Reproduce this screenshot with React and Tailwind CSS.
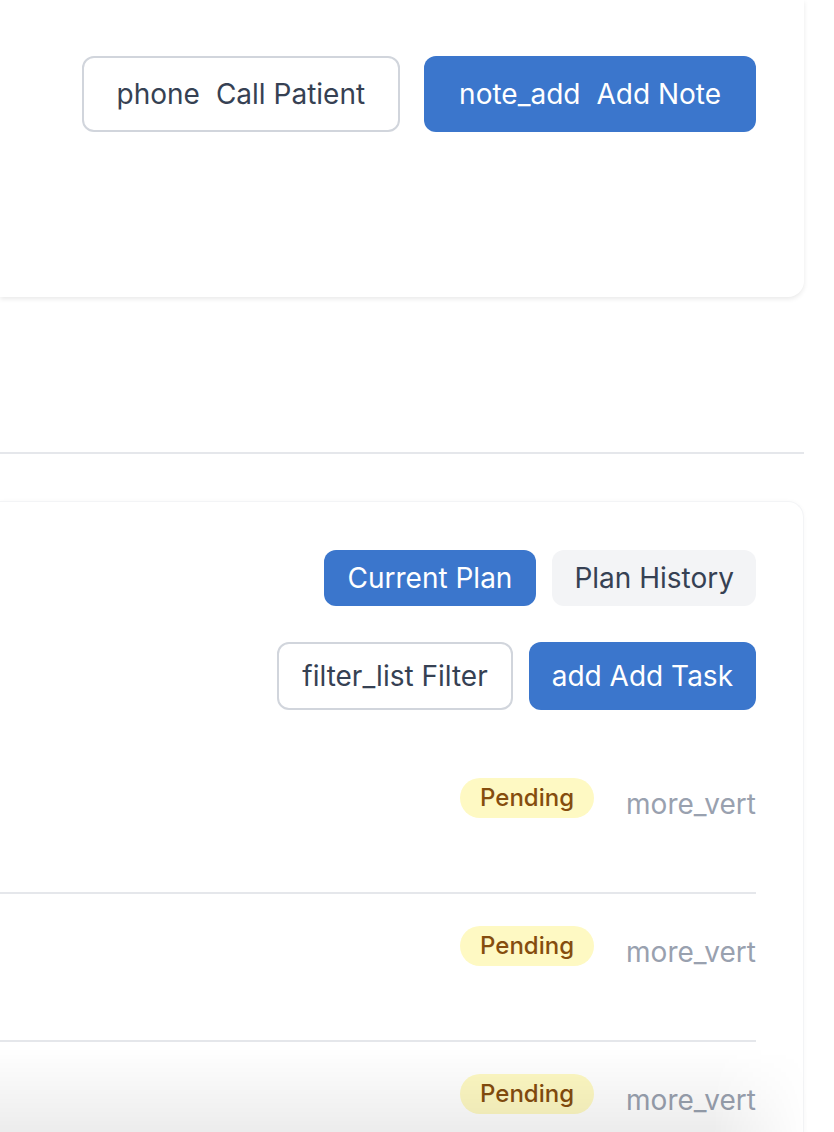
import React from 'react';

const TaskRow = () => (
  <div className="flex justify-end items-start gap-[32px] pt-[32px] h-[148px] border-b-2 border-gray-200">
    <span className="rounded-full bg-[#fef9c3] px-[20px] py-[4px] text-[24px] leading-[32px] font-medium text-[#854d0e]">
      Pending
    </span>
    <span className="pt-[6px] text-[28px] leading-[40px] text-gray-400">more_vert</span>
  </div>
);

export default function App() {
  return (
    <div className="relative w-[834px] h-[1132px] overflow-hidden bg-white font-['Inter',sans-serif]">
      {/* patient header card */}
      <div className="w-[804px] h-[297px] bg-white rounded-br-2xl shadow-[0_2px_5px_rgba(0,0,0,0.09)] pt-[56px] pr-[48px] flex justify-end items-start gap-[24px]">
        <button className="flex items-center gap-[16px] h-[76px] px-[33px] rounded-[12px] border-2 border-gray-300 bg-white text-[28px] leading-[40px] text-gray-700">
          <span>phone</span>
          <span>Call Patient</span>
        </button>
        <button className="flex items-center gap-[16px] h-[76px] px-[35px] rounded-[12px] bg-[#3b76cc] text-[28px] leading-[40px] text-white">
          <span>note_add</span>
          <span>Add Note</span>
        </button>
      </div>

      <div className="mt-[155px] w-[804px] h-[2px] bg-gray-200" />

      {/* care plan card */}
      <div className="mt-[47px] w-[804px] h-[700px] bg-white rounded-tr-2xl border-t border-r border-gray-100 shadow-[0_0_4px_rgba(0,0,0,0.03)] pt-[48px] pr-[47px]">
        <div className="flex justify-end gap-[16px]">
          <button className="h-[56px] px-[24px] rounded-[12px] bg-[#3b76cc] text-[28px] leading-[40px] text-white">
            Current Plan
          </button>
          <button className="h-[56px] px-[22px] rounded-[12px] bg-gray-100 text-[28px] leading-[40px] text-gray-700">
            Plan History
          </button>
        </div>
        <div className="mt-[36px] flex justify-end gap-[16px]">
          <button className="h-[68px] px-[23px] rounded-[12px] border-2 border-gray-300 bg-white text-[28px] leading-[40px] text-gray-700">
            filter_list Filter
          </button>
          <button className="h-[68px] px-[23px] rounded-[12px] bg-[#3b76cc] text-[28px] leading-[40px] text-white">
            add Add Task
          </button>
        </div>
        <div className="mt-[36px]">
          <TaskRow />
          <TaskRow />
          <TaskRow />
        </div>
      </div>

      {/* bottom fade */}
      <div className="absolute left-0 bottom-0 w-[810px] h-[84px] bg-gradient-to-b from-transparent to-[rgba(0,0,0,0.075)] [mask-image:linear-gradient(to_right,black_88%,transparent)]" />
    </div>
  );
}
